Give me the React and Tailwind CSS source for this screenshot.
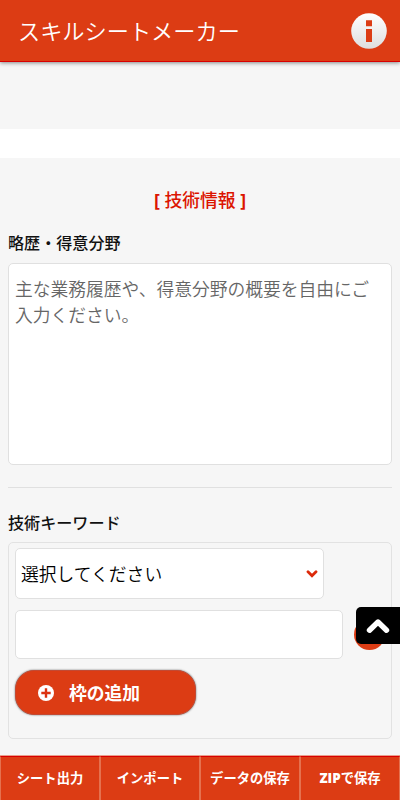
import React from "react";

const actions = ["シート出力", "インポート", "データの保存"];

function Header() {
  return (
    <header className="relative flex h-[62px] items-center justify-between border-b border-[#d90000] bg-[#dc3c14] pl-[18px] pr-[13px] shadow-[0_1px_4px_rgba(0,0,0,0.45)]">
      <h1 className="pb-[2px] text-[22.2px] font-[350] leading-[60px] text-white">スキルシートメーカー</h1>
      <button aria-label="情報" className="size-9">
        <svg viewBox="0 0 36 36" className="block size-9">
          <defs>
            <linearGradient id="badge" x1="0" y1="0" x2="0" y2="1">
              <stop offset="0" stopColor="#fff" />
              <stop offset="1" stopColor="#dedede" />
            </linearGradient>
          </defs>
          <circle cx="18" cy="18" r="17.8" fill="url(#badge)" />
          <path d="M15 7.200h6v6h-6zM15 16h6v13h-6z" fill="#dc3c14" />
        </svg>
      </button>
    </header>
  );
}

function KeywordPanel() {
  return (
    <div className="mt-[8px] h-[197px] rounded-[5px] border border-[#e2e2e2] px-[6px] pt-[5px]">
      <button className="flex h-[51px] w-[309px] items-center justify-between rounded-[5px] border border-[#e0e0e0] bg-white pl-[5px] pr-[5px] text-[17.8px] font-[350] text-black">
        <span>選択してください</span>
        <svg viewBox="0 0 12 8" className="h-2 w-3">
          <path d="M2 1.800l4 4L10 1.800" fill="none" stroke="#dc2a0a" strokeWidth="2.800" strokeLinecap="round" />
        </svg>
      </button>
      <div className="mt-[11px] flex items-center">
        <input aria-label="技術キーワード" className="h-[49px] w-[328px] shrink-0 rounded-[5px] border border-[#e0e0e0] bg-white px-2 outline-none" />
        <button aria-label="削除" className="ml-[11px] size-[31px] shrink-0 rounded-full bg-[#dc3c14]" />
      </div>
      <button className="mt-[11px] flex h-[45px] w-[181px] items-center rounded-[19px] border border-[#c24a34] bg-[#dc3c14] pl-[22px] text-[17.8px] font-bold text-white shadow-[0_0_2px_rgba(0,0,0,0.6)]">
        <svg viewBox="0 0 16 16" className="mr-[15px] size-4">
          <circle cx="8" cy="8" r="8" fill="#fff" />
          <path d="M8 3.300v9.400M3.300 8h9.400" stroke="#dc3210" strokeWidth="2.400" />
        </svg>
        <span className="pb-px">枠の追加</span>
      </button>
    </div>
  );
}

export default function App() {
  return (
    <div className="relative flex h-[800px] w-[400px] flex-col overflow-hidden bg-[#f6f6f6] font-['Noto_Sans_CJK_JP',sans-serif] text-[#111]">
      <Header />
      <div className="h-[67px] shrink-0" />
      <div className="h-[29px] shrink-0 bg-white" />
      <main className="flex-1 px-2 pt-[28px]">
        <h2 className="h-[27px] text-center font-['Open_Sans','Noto_Sans_CJK_JP',sans-serif] text-[17.8px] font-bold leading-[26px] text-[#dc1400]">
          [ <span className="font-['Noto_Sans_CJK_JP',sans-serif] font-medium">技術情報</span> ]
        </h2>
        <h3 className="mt-[17px] text-[16.1px] font-medium leading-6">略歴・得意分野</h3>
        <textarea
          className="mt-[9px] block h-[202px] w-full resize-none rounded-[5px] border border-[#e0e0e0] bg-white px-[6px] pt-[11px] text-[17.75px] font-[350] leading-[26px] text-black outline-none placeholder:text-[#666]"
          placeholder="主な業務履歴や、得意分野の概要を自由にご入力ください。"
        />
        <hr className="mt-[22px] border-[#e0e0e0]" />
        <h3 className="mt-[22px] text-[16.1px] font-medium leading-6">技術キーワード</h3>
        <KeywordPanel />
      </main>
      <nav className="grid h-[45px] shrink-0 grid-cols-4 border-t border-[#e9a08c] bg-[#dc3c14] text-[13.3px] font-bold text-white">
        {actions.map((label) => (
          <button key={label} className="whitespace-nowrap border-x border-t border-x-[#e5714f] border-t-[#d90000] pb-[2px]">
            {label}
          </button>
        ))}
        <button className="whitespace-nowrap border-x border-t border-x-[#e5714f] border-t-[#d90000] pb-px">
          <span className="font-['Open_Sans',sans-serif] font-extrabold">ZIP</span>で保存
        </button>
      </nav>
      <button aria-label="ページの先頭へ" className="absolute right-0 top-[607px] flex h-[37px] w-[44px] items-center justify-center rounded-l-[5px] bg-black">
        <svg viewBox="0 0 24 16" className="h-4 w-6">
          <path d="M3.500 12.200L12 4l8.500 8.200" fill="none" stroke="#fff" strokeWidth="5.400" strokeLinecap="round" strokeLinejoin="round" />
        </svg>
      </button>
    </div>
  );
}
